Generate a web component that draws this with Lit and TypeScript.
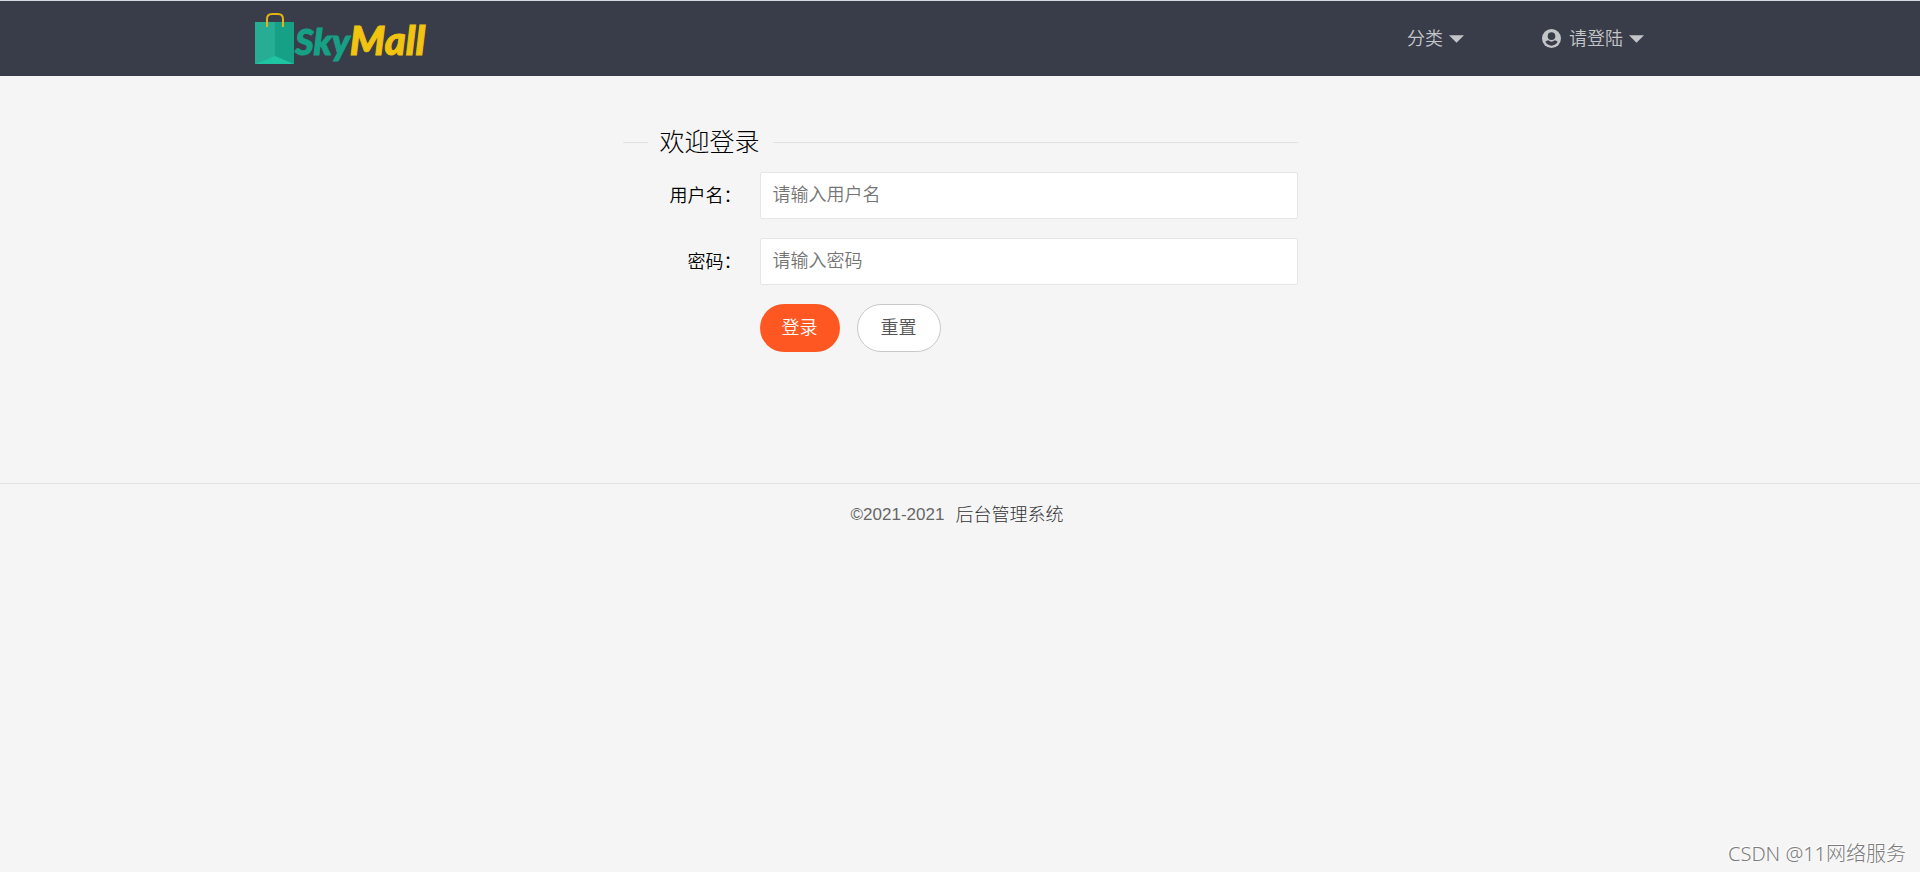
import { LitElement, html, css, svg } from "lit";
import { customElement } from "lit/decorators.js";

const caret = svg`<svg class="caret" viewBox="0 0 16 8" aria-hidden="true"><path d="M0 0h16L8 8z" fill="currentColor"/></svg>`;

@customElement("app-root")
export class AppRoot extends LitElement {
  static styles = css`
    :host {
      display: block;
      min-height: 100vh;
      background: #f5f5f5;
      color: #000;
      font: 18px/30px "Liberation Sans", "Noto Sans CJK SC", sans-serif;
      font-weight: 350;
    }
    *, *::before, *::after { box-sizing: border-box; }
    a { color: inherit; text-decoration: none; }
    .header {
      background: #393d49;
      border-top: 1px solid #d3dde1;
    }
    .bar {
      max-width: 1464px;
      height: 75px;
      margin: 0 auto;
      padding: 0 48px 0 27px;
      display: flex;
      align-items: center;
      justify-content: space-between;
    }
    .logo { display: flex; align-items: center; }
    .bag { width: 40px; height: 52px; display: block; }
    .word {
      font: italic 900 36px/44px Lato, sans-serif;
      color: #16a085;
      padding-top: 4px;
      -webkit-text-stroke: 1px currentColor;
    }
    .word .mall { color: #f1c40f; font-size: 40px; }
    .nav {
      display: flex;
      gap: 78px;
      color: #c4c5c8;
    }
    .nav a { display: flex; align-items: center; }
    .caret { width: 15px; height: 8px; margin-left: 6px; }
    .user { width: 19px; height: 19px; margin-right: 8px; }
    .form {
      width: 675px;
      max-width: 100%;
      margin: 51px auto 0;
    }
    .set {
      margin: 0;
      padding: 15px 0 0;
      border: 0;
      border-top: 1px solid #e2e2e2;
      min-width: 0;
    }
    .set legend {
      margin-left: 25px;
      padding: 0 13px 0 12px;
      font-size: 25px;
      font-weight: 300;
      line-height: 30px;
    }
    .row {
      display: grid;
      grid-template-columns: 137px 1fr;
      align-items: center;
      margin-bottom: 19px;
    }
    .row label {
      text-align: right;
      padding-right: 18px;
    }
    .row input {
      width: 100%;
      height: 47px;
      padding: 0 0 0 12px;
      border: 1px solid #e6e6e6;
      border-radius: 2px;
      background: #fff;
      font: inherit;
      outline: none;
    }
    .row input::placeholder { color: #757575; opacity: 1; }
    .actions { display: flex; gap: 17px; margin-left: 137px; }
    .btn {
      height: 48px;
      padding: 0 22px;
      border: 0;
      border-radius: 24px;
      background: #ff5722;
      color: #fff;
      font: inherit;
      cursor: pointer;
    }
    .btn.plain {
      padding: 0 23px;
      border: 1px solid #c9c9c9;
      background: #fff;
      color: #555;
    }
    .footer {
      margin-top: 131px;
      padding: 16px 6px 16px 0;
      border-top: 1px solid #e2e2e2;
      display: flex;
      justify-content: center;
      gap: 11px;
      color: #666;
    }
    .footer span { font-size: 17px; }
    .footer a { color: #333; font-weight: 300; }
    .mark {
      position: absolute;
      right: 14px;
      bottom: 3px;
      font: 300 20px/30px "Noto Sans", "Noto Sans CJK SC", sans-serif;
      color: #7c7c7c;
      text-shadow: -1px -1px 0 #fff;
    }
  `;

  render() {
    return html`
      <header class="header">
        <div class="bar">
          <a class="logo" href="#" aria-label="SkyMall">
            <svg class="bag" viewBox="0 0 40 52" aria-hidden="true">
              <path d="M0 9h20v42H0z" fill="#26ad93" />
              <path d="M20 9h19v42H20z" fill="#16a085" />
              <path d="M0 51L20 43l19 8z" fill="#1fc4a3" />
              <path d="M12 14V6q0-5 5-5h6q5 0 5 5v8" fill="none" stroke="#e0b414" stroke-width="2" />
            </svg>
            <span class="word">Sky<span class="mall">Mall</span></span>
          </a>
          <nav class="nav">
            <a href="#">分类${caret}</a>
            <a href="#">
              <svg class="user" viewBox="0 0 20 20" aria-hidden="true">
                <circle cx="10" cy="10" r="10" fill="currentColor" />
                <circle cx="10" cy="7.500" r="4" fill="#393d49" />
                <path
                  d="M3.500 13.500q1.500-1.500 3.200-1.700 3.300 3 6.600 0 1.700.2 3.200 1.700-2.300 4-6.500 4t-6.500-4z"
                  fill="#393d49"
                />
              </svg>请登陆${caret}</a>
          </nav>
        </div>
      </header>
      <form class="form" @submit=${(e: Event) => e.preventDefault()}>
        <fieldset class="set">
          <legend>欢迎登录</legend>
          <div class="row">
            <label for="username">用户名：</label>
            <input id="username" type="text" placeholder="请输入用户名" />
          </div>
          <div class="row">
            <label for="password">密码：</label>
            <input id="password" type="password" placeholder="请输入密码" />
          </div>
          <div class="actions">
            <button class="btn" type="submit">登录</button>
            <button class="btn plain" type="reset">重置</button>
          </div>
        </fieldset>
      </form>
      <footer class="footer">
        <span>©2021-2021</span>
        <a href="#">后台管理系统</a>
      </footer>
      <div class="mark">CSDN @11网络服务</div>
    `;
  }
}
